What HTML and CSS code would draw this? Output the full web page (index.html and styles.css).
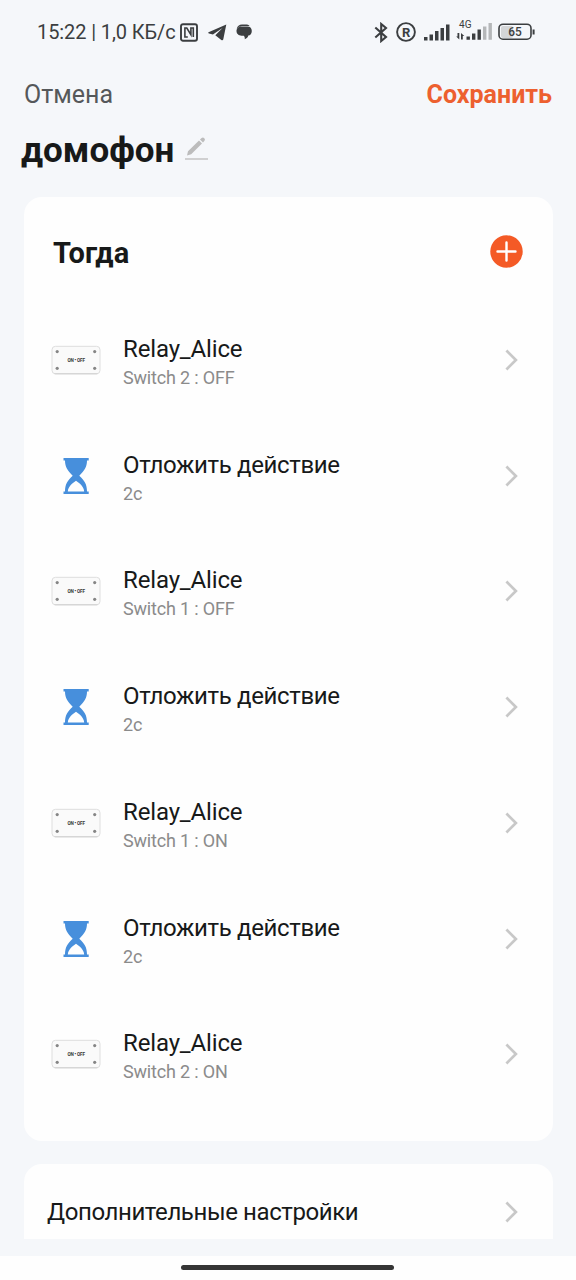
FILE: index.html
```html
<!DOCTYPE html>
<html lang="ru">
<head>
<meta charset="utf-8">
<title>домофон</title>
<link rel="stylesheet" href="styles.css">
</head>
<body>
<svg class="defs" aria-hidden="true">
  <symbol id="chevron" viewBox="0 0 14 24"><path d="M2.400 2.500 11.900 12 2.400 21.500" fill="none" stroke="#c8c8c8" stroke-width="2.700"/></symbol>
  <symbol id="hourglass" viewBox="0 0 26 36">
    <path fill="#478fdc" fill-rule="evenodd" d="M.5 0H25.700V2.600H24C24 9 21.500 12.500 16.300 17.800C21.500 22.500 24 26.500 24 33.400H25.700V36H.5V33.400H2C2 26.500 4.500 22.500 9.700 17.800C4.500 12.500 2 9 2 2.600H.5ZM13 22.800C9.500 25 5.300 28.500 4.800 33.400H21.200C20.700 28.500 16.500 25 13 22.800Z"/>
  </symbol>
  <symbol id="relay" viewBox="0 0 50 30">
    <rect x="1" y="1.300" width="48" height="27.500" rx="3.500" fill="#fafafa" stroke="#dedede"/>
    <path d="M3.500 28.800H46.500" stroke="#cfcfcf"/>
    <g fill="#858585"><circle cx="6.200" cy="6.600" r="1.600"/><circle cx="43.700" cy="6.600" r="1.600"/><circle cx="6.200" cy="23.300" r="1.600"/><circle cx="43.700" cy="23.300" r="1.600"/></g>
    <text x="25.200" y="16.900" text-anchor="middle" textLength="17.500" font-family="Roboto, sans-serif" font-size="4.600" font-weight="700" fill="#333">ON • OFF</text>
  </symbol>
</svg>
<div class="screen">
  <header class="status">
    <span class="status-text">15:22 | 1,0 КБ/с</span>
    <svg class="nfc" width="18" height="19" viewBox="0 0 18 19"><rect x="1" y="1.200" width="16" height="16.500" rx="2" fill="none" stroke="#3b3e40" stroke-width="1.900"/><path d="M7.800 14H4.900V5H6.800L10.900 11.700V5H13.300V14" fill="none" stroke="#3b3e40" stroke-width="1.600"/></svg>
    <svg class="telegram" width="19" height="17" viewBox="0 0 19 17"><path fill="#3b3e40" d="M18.300.5.5 8.200C0 8.700.3 9.200 1 9.400L4.900 10.500 14.500 4 7.300 11.300 13.300 16C14.300 16.600 15 16.400 15.300 15.300Z"/></svg>
    <svg class="chat" width="17" height="16" viewBox="0 0 17 16"><path fill="#3b3e40" d="M.7 5C1.200 2 3.300.5 6 .5H9.500C11.500.5 12.700 1 13.600 1.900H6C3.700 1.900 2 3 .7 5ZM5.500 2.500H11.500C14.300 2.500 15.800 4.300 15.800 7C15.800 9.700 14.300 11.300 12.300 11.600C12 13.200 10.700 14.600 8.700 15.300C9 14 8.700 12.700 7.800 11.700H5.500C2.700 11.700.5 9.900.5 7.100S2.700 2.500 5.500 2.500Z"/></svg>
    <svg class="bt" width="14" height="21" viewBox="0 0 14 21"><path d="M1.300 5.500 12 15 7.200 19V2L12 6 1.300 15.500" fill="none" stroke="#3b3e40" stroke-width="2.100"/></svg>
    <svg class="reg" width="20" height="20" viewBox="0 0 20 20"><circle cx="10" cy="10" r="8.900" fill="none" stroke="#3b3e40" stroke-width="1.900"/><text x="10.200" y="14.500" text-anchor="middle" font-family="Roboto, sans-serif" font-size="13" font-weight="700" fill="#3b3e40">R</text></svg>
    <svg class="signal" width="26" height="17" viewBox="0 0 26 17"><path fill="#3b3e40" d="M0 13H3.500V16.500H0ZM5.500 10.500H9V16.500H5.500ZM11 7H14.500V16.500H11ZM16.500 4H20V16.500H16.500ZM22 .5H25.500V16.500H22Z"/></svg>
    <svg class="lte" width="37" height="25" viewBox="0 0 37 25"><text x="3" y="13" textLength="12.500" lengthAdjust="spacingAndGlyphs" font-family="Roboto, sans-serif" font-size="10.500" fill="#3b3e40">4G</text><path fill="#3b3e40" d="M1.500 18H3.300V24.500L.2 21.500H1.500ZM5 24.500V18L8.300 21H6.800V24.500ZM10.500 21.500H13.900V24.700H10.500ZM16 18.500H19.400V24.700H16ZM21.500 14.500H24.900V24.700H21.500Z"/><path fill="#b5b7b9" d="M27 11.500H30.400V24.700H27ZM32.500 8H35.900V24.700H32.500Z"/></svg>
    <svg class="battery" width="38" height="18" viewBox="0 0 38 18"><rect x="3" y="3" width="12" height="12" rx="2" fill="#d4d6d8"/><rect x="1" y="1.200" width="32" height="15" rx="4" fill="none" stroke="#3b3e40" stroke-width="1.600"/><path d="M35.600 6.500V11.500" stroke="#3b3e40" stroke-width="2"/><text x="17" y="13.100" text-anchor="middle" textLength="13.500" lengthAdjust="spacingAndGlyphs" font-family="Roboto, sans-serif" font-size="12" font-weight="500" fill="#3b3e40">65</text></svg>
  </header>
  <nav class="actions"><span class="cancel">Отмена</span><span class="save">Сохранить</span></nav>
  <div class="title-row">
    <h1 class="title">домофон</h1>
    <svg class="pencil" width="23" height="23" viewBox="0 0 23 23"><path d="M0 22H23" stroke="#bcbcbc" stroke-width="1.300"/><path fill="#bcbcbc" d="M2 18.500 3 14.200 14 3.400 17 6.400 6.200 17.300ZM15 2.500 16.600 1Q18 0 19.300 1.200T19.500 3.800L18 5.400Z"/></svg>
  </div>
  <main class="content">
    <section class="card">
      <div class="card-head">
        <h2 class="card-title">Тогда</h2>
        <svg class="add" width="33" height="33" viewBox="0 0 33 33"><circle cx="16.500" cy="16.500" r="16.200" fill="#f45a26"/><path d="M16.500 7.500V25.500M7.500 16.500H25.500" stroke="#fff" stroke-width="2.400" stroke-linecap="round"/></svg>
      </div>
      <ul class="list">
        <li class="item"><svg class="relay"><use href="#relay"/></svg><div class="label"><p class="name">Relay_Alice</p><p class="note">Switch 2 : OFF</p></div><svg class="chevron"><use href="#chevron"/></svg></li>
        <li class="item"><svg class="hourglass"><use href="#hourglass"/></svg><div class="label"><p class="name wide">Отложить действие</p><p class="note">2с</p></div><svg class="chevron"><use href="#chevron"/></svg></li>
        <li class="item"><svg class="relay"><use href="#relay"/></svg><div class="label"><p class="name">Relay_Alice</p><p class="note">Switch 1 : OFF</p></div><svg class="chevron"><use href="#chevron"/></svg></li>
        <li class="item"><svg class="hourglass"><use href="#hourglass"/></svg><div class="label"><p class="name wide">Отложить действие</p><p class="note">2с</p></div><svg class="chevron"><use href="#chevron"/></svg></li>
        <li class="item"><svg class="relay"><use href="#relay"/></svg><div class="label"><p class="name">Relay_Alice</p><p class="note">Switch 1 : ON</p></div><svg class="chevron"><use href="#chevron"/></svg></li>
        <li class="item"><svg class="hourglass"><use href="#hourglass"/></svg><div class="label"><p class="name wide">Отложить действие</p><p class="note">2с</p></div><svg class="chevron"><use href="#chevron"/></svg></li>
        <li class="item"><svg class="relay"><use href="#relay"/></svg><div class="label"><p class="name">Relay_Alice</p><p class="note">Switch 2 : ON</p></div><svg class="chevron"><use href="#chevron"/></svg></li>
      </ul>
    </section>
    <section class="more"><span class="more-text">Дополнительные настройки</span><svg class="chevron"><use href="#chevron"/></svg></section>
  </main>
  <footer class="home"><div class="home-bar"></div></footer>
</div>
</body>
</html>
```
FILE: styles.css
```css
* { box-sizing: border-box; margin: 0; padding: 0; }
body { font-family: Roboto, "Noto Sans", sans-serif; background: #f5f7fa; color: #171919; }
svg { display: block; flex: none; }
.defs { display: none; }
.screen { width: 576px; height: 1280px; display: flex; flex-direction: column; overflow: hidden; }

.status { height: 64px; padding-left: 37px; display: flex; align-items: center; color: #3b3e40; }
.status-text { width: 143px; font-size: 20px; line-height: 24px; letter-spacing: -0.1px; white-space: nowrap; }
.telegram { margin-left: 10px; }
.chat { margin-left: 9px; }
.bt { margin-left: 121px; }
.reg { margin-left: 8px; }
.signal { margin-left: 8px; }
.lte { margin-left: 6px; margin-bottom: 9px; }
.battery { margin-left: 5px; }

.actions { height: 60px; padding: 1px 24px 0; display: flex; justify-content: space-between; align-items: center; font-size: 25px; line-height: 30px; }
.cancel { color: #55585a; }
.save { color: #ed602f; font-weight: 700; }

.title-row { height: 73px; padding: 6px 0 0 21px; display: flex; align-items: flex-start; gap: 11px; }
.title { font-size: 35px; line-height: 42px; font-weight: 700; }
.pencil { margin-top: 7px; }

.content { height: 1042px; padding: 0 23px 0 24px; overflow: hidden; }
.card { height: 944px; border-radius: 18px; background: #fefefe; }
.card-head { height: 105px; padding: 2px 30px 0 29px; display: flex; align-items: center; justify-content: space-between; }
.card-title { font-size: 29px; line-height: 34px; font-weight: 700; padding-top: 4px; }
.add { margin-top: 2px; }
.list { list-style: none; }
.item { height: 115.75px; padding: 0 35px 0 27px; display: flex; align-items: center; }
.relay { width: 50px; height: 30px; margin-right: 22px; }
.hourglass { width: 26px; height: 36px; margin: 0 34px 0 12px; }
.label { flex: 1; padding-top: 5px; }
.name { font-size: 24px; line-height: 30px; letter-spacing: -0.15px; }
.name.wide { letter-spacing: -0.35px; }
.note { font-size: 18px; line-height: 27px; letter-spacing: -0.18px; color: #8b8b8b; }
.chevron { width: 14px; height: 24px; }

.more { height: 100px; margin-top: 23px; padding: 0 35px 5px 23px; display: flex; align-items: center; justify-content: space-between; border-radius: 18px 18px 0 0; background: #fefefe; }
.more-text { font-size: 24px; line-height: 30px; letter-spacing: -0.4px; padding-top: 1px; }
.home { height: 24px; margin-top: 17px; padding: 9px 1px 0 0; background: #fefefe; }
.home-bar { width: 213px; height: 5px; margin: 0 auto; border-radius: 3px; background: #353535; }
```
